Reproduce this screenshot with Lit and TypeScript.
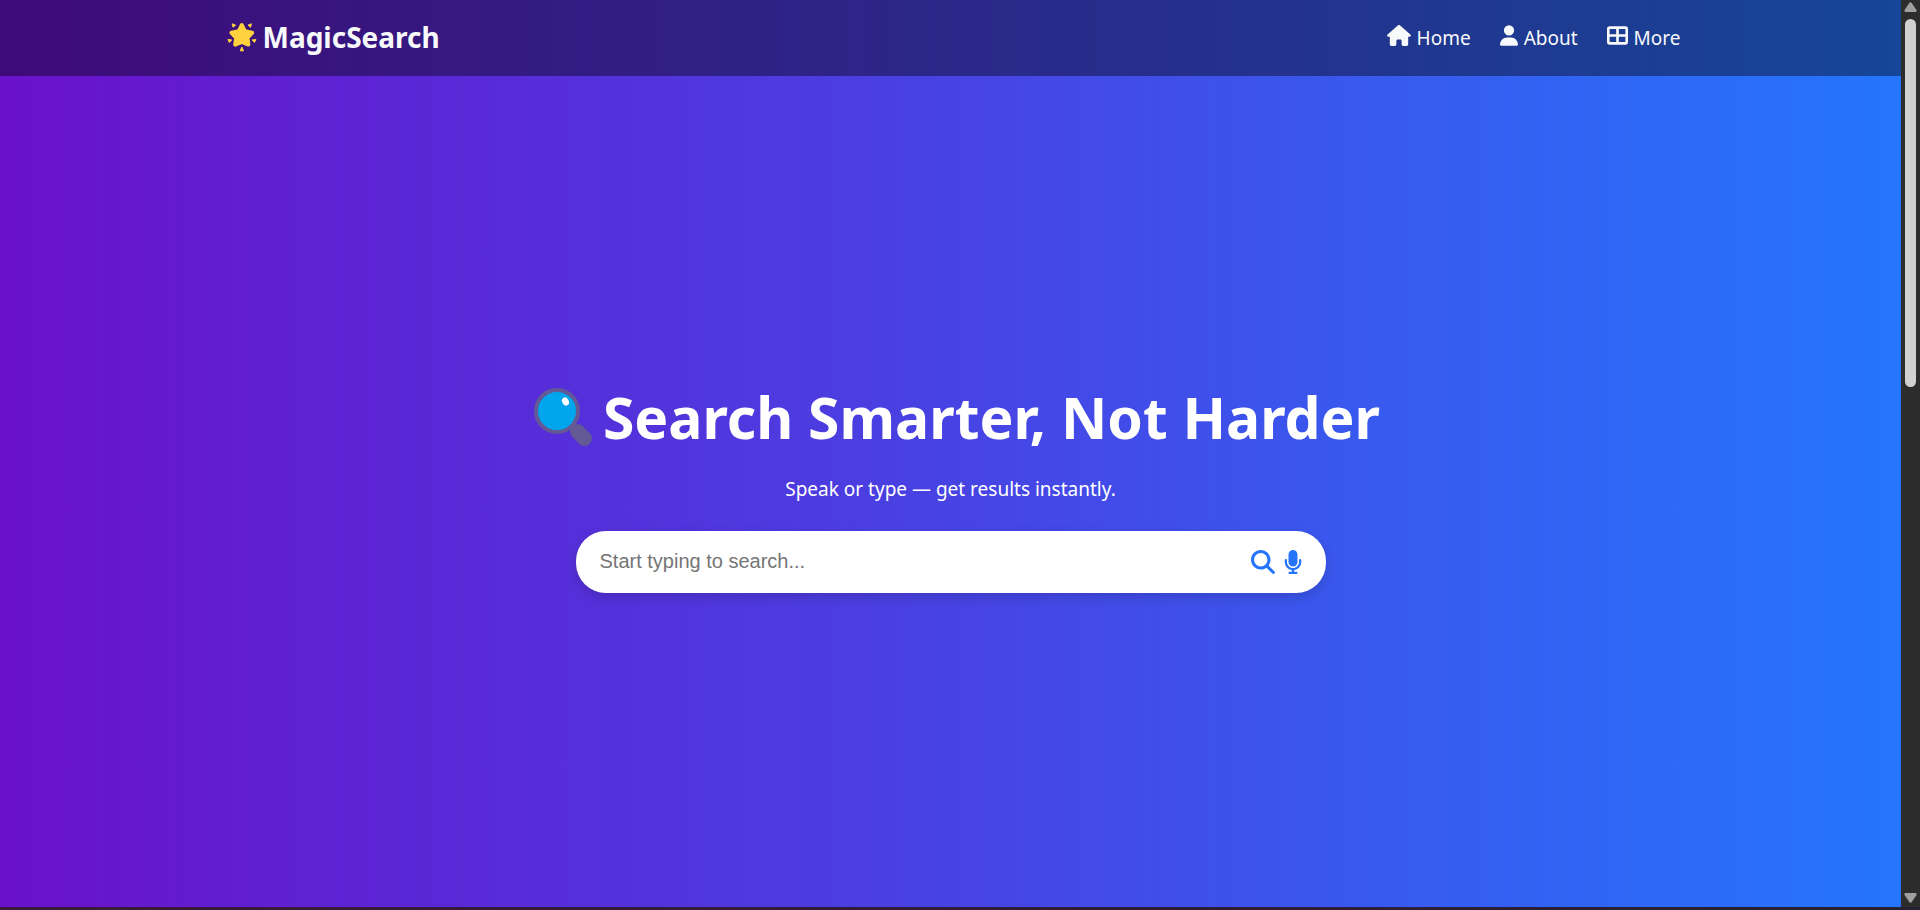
import { LitElement, html, css, svg } from "lit";
import { customElement } from "lit/decorators.js";

const homeIcon = svg`<svg class="icon" width="24" height="21" viewBox="0 0 576 512" aria-hidden="true"><path d="M575.800 255.500c0 18-15 32.100-32 32.100h-32l.7 160.200c0 2.700-.2 5.400-.5 8.100V472c0 22.100-17.900 40-40 40h-16c-1.100 0-2.200 0-3.300-.1-1.400.1-2.800.1-4.200.1H392c-22.100 0-40-17.900-40-40v-88c0-17.700-14.300-32-32-32h-64c-17.700 0-32 14.300-32 32v88c0 22.100-17.900 40-40 40h-55.900c-1.500 0-3-.1-4.500-.2-1.200.1-2.400.2-3.600.2h-16c-22.100 0-40-17.900-40-40V360c0-.9 0-1.900.1-2.800v-69.600H32c-18 0-32-14-32-32.100 0-9 3-17 10-24L266.400 8c7-7 15-8 22-8s15 2 21 7l255.400 224.500c8 7 12 15 11 24z"/></svg>`;
const userIcon = svg`<svg class="icon" width="18" height="21" viewBox="0 0 448 512" aria-hidden="true"><path d="M224 256a128 128 0 1 0 0-256 128 128 0 1 0 0 256zm-45.700 48C79.800 304 0 383.800 0 482.300 0 498.700 13.300 512 29.700 512h388.600c16.400 0 29.700-13.300 29.700-29.700C448 383.800 368.200 304 269.700 304h-91.400z"/></svg>`;
const gridIcon = svg`<svg class="icon" width="21" height="21" viewBox="0 0 512 512" aria-hidden="true"><path fill-rule="evenodd" d="M64 32h384a64 64 0 0 1 64 64v320a64 64 0 0 1-64 64H64a64 64 0 0 1-64-64V96a64 64 0 0 1 64-64zm0 64v128h160V96zm224 0v128h160V96zM64 288v128h160V288zm224 0v128h160V288z"/></svg>`;
const searchIcon = svg`<svg width="24" height="24" viewBox="0 0 512 512" aria-hidden="true"><path d="M416 208c0 45.900-14.900 88.300-40 122.700l126.600 126.700c12.500 12.500 12.500 32.800 0 45.300s-32.800 12.500-45.300 0L330.700 376c-34.400 25.200-76.800 40-122.700 40C93.100 416 0 322.900 0 208S93.100 0 208 0s208 93.100 208 208zM208 352a144 144 0 1 0 0-288 144 144 0 1 0 0 288z"/></svg>`;
const micIcon = svg`<svg width="18" height="24" viewBox="0 0 384 512" aria-hidden="true"><path d="M192 0c-53 0-96 43-96 96v160c0 53 43 96 96 96s96-43 96-96V96c0-53-43-96-96-96zM64 216c0-13.300-10.700-24-24-24s-24 10.700-24 24v40c0 89.100 66.200 162.700 152 174.400V464h-48c-13.300 0-24 10.700-24 24s10.700 24 24 24h144c13.300 0 24-10.700 24-24s-10.700-24-24-24h-48v-33.600c85.800-11.700 152-85.300 152-174.400v-40c0-13.300-10.700-24-24-24s-24 10.700-24 24v40c0 70.700-57.300 128-128 128S64 326.700 64 256v-40z"/></svg>`;
const starIcon = svg`<svg width="30" height="30" viewBox="0 0 30 30" aria-hidden="true"><g fill="#ffd23e" stroke="#ffd23e" stroke-linejoin="round"><path stroke-width="4" d="M14.800 3 17.800 9.200 25.200 10.600 20.400 15.800 21.400 22.600 14.800 20 8.200 22.600 9.200 15.800 4.400 10.600 11.800 9.200z"/><path stroke-width="1" d="M5.200 1.800 8.600 3.200 6 5.200zM24.400 1.800 21 3.200 23.600 5.200zM.9 17.500 4.700 17.900 2.300 20.400zM28.900 17.500 25.100 17.900 27.500 20.400zM14.900 25 16.500 28.800 13.200 28.800z"/></g></svg>`;
const lensIcon = svg`<svg width="60" height="60" viewBox="0 0 60 60" aria-hidden="true"><path d="M44.500 44.500 51.500 51.500" stroke="#635994" stroke-width="15" stroke-linecap="round"/><circle cx="24" cy="24" r="21" fill="#00a6ed" stroke="#635994" stroke-width="4"/><ellipse cx="32.500" cy="14.500" rx="3.300" ry="4.200" fill="#fff" transform="rotate(-28 32.500 14.500)"/></svg>`;

const links = [
  { label: "Home", icon: homeIcon },
  { label: "About", icon: userIcon },
  { label: "More", icon: gridIcon },
];

@customElement("app-root")
export class AppRoot extends LitElement {
  static styles = css`
    :host {
      display: grid;
      grid-template-columns: 1fr 19px;
      grid-template-rows: 1fr 3px;
      height: 100vh;
      font-family: "Segoe UI", "Noto Sans", sans-serif;
      color: #fff;
    }
    * { box-sizing: border-box; }
    .page {
      display: flex;
      flex-direction: column;
      background: linear-gradient(to right, #6a11cb, #2575fc);
    }
    .header { background: rgba(0, 0, 0, 0.4); color: #f8f9fa; }
    .bar {
      display: flex;
      align-items: center;
      justify-content: space-between;
      max-width: 1500px;
      height: 76px;
      margin: 0 auto;
      padding: 0 20px;
    }
    .brand {
      display: flex;
      align-items: center;
      gap: 6px;
      padding: 0 0 2px 6px;
      font-size: 28px;
      font-weight: 700;
    }
    .nav { display: flex; gap: 29px; }
    .link {
      display: flex;
      align-items: center;
      gap: 6px;
      color: inherit;
      font-size: 19px;
      text-decoration: none;
    }
    .icon { fill: currentColor; margin-bottom: 6px; }
    .hero {
      flex: 1;
      display: flex;
      flex-direction: column;
      align-items: center;
      justify-content: center;
      padding: 0 20px 14px;
    }
    .title {
      display: flex;
      align-items: center;
      gap: 10px;
      margin: 0;
      padding-left: 12px;
      font-size: 57px;
      line-height: 80px;
      font-weight: 700;
    }
    .tagline { margin: 18px 0 28px; font-size: 19px; line-height: 28px; }
    .search {
      display: flex;
      align-items: center;
      width: 100%;
      max-width: 750px;
      height: 62px;
      padding: 0 24px;
      background: #fff;
      border-radius: 30px;
      box-shadow: 0 4px 12px rgba(0, 0, 0, 0.15);
    }
    .field {
      flex: 1;
      min-width: 0;
      padding: 0;
      border: 0;
      outline: 0;
      background: none;
      color: #222;
      font: 20px "Liberation Sans", Arial, sans-serif;
    }
    .field::placeholder { color: #757575; }
    .tool {
      display: flex;
      padding: 0;
      margin-left: 9px;
      border: 0;
      background: none;
      fill: #2575fc;
      cursor: pointer;
    }
    .scroll {
      display: flex;
      flex-direction: column;
      align-items: center;
      background: #2c2c2c;
      fill: #9f9f9f;
    }
    .thumb { width: 11px; height: 368px; margin: 7px 0 auto; border-radius: 6px; background: #d0d0d0; }
    .up { margin-top: 2px; }
    .down { margin-bottom: 4px; }
    .edge { grid-column: 1 / -1; background: linear-gradient(to right, #3a1a38, #262035); }
  `;

  render() {
    return html`
      <div class="page">
        <header class="header">
          <div class="bar">
            <div class="brand">${starIcon}<span>MagicSearch</span></div>
            <nav class="nav">
              ${links.map((l) => html`<a class="link" href="#">${l.icon}<span>${l.label}</span></a>`)}
            </nav>
          </div>
        </header>
        <main class="hero">
          <h1 class="title">${lensIcon}<span>Search Smarter, Not Harder</span></h1>
          <p class="tagline">Speak or type — get results instantly.</p>
          <form class="search" role="search" @submit=${(e: Event) => e.preventDefault()}>
            <input class="field" type="text" aria-label="Search" placeholder="Start typing to search..." />
            <button class="tool" type="submit" aria-label="Search">${searchIcon}</button>
            <button class="tool" type="button" aria-label="Voice search">${micIcon}</button>
          </form>
        </main>
      </div>
      <div class="scroll" aria-hidden="true">
        <svg class="up" width="13" height="10" viewBox="0 0 13 10"><path d="M5.500.8q1-1.200 2 0l5 7.200q.5 1.800-1 2h-10q-1.500-.2-1-2z"/></svg>
        <div class="thumb"></div>
        <svg class="down" width="13" height="10" viewBox="0 0 13 10"><path d="M5.500 9.200q1 1.200 2 0l5-7.200q.5-1.800-1-2h-10q-1.500.2-1 2z"/></svg>
      </div>
      <div class="edge"></div>
    `;
  }
}
